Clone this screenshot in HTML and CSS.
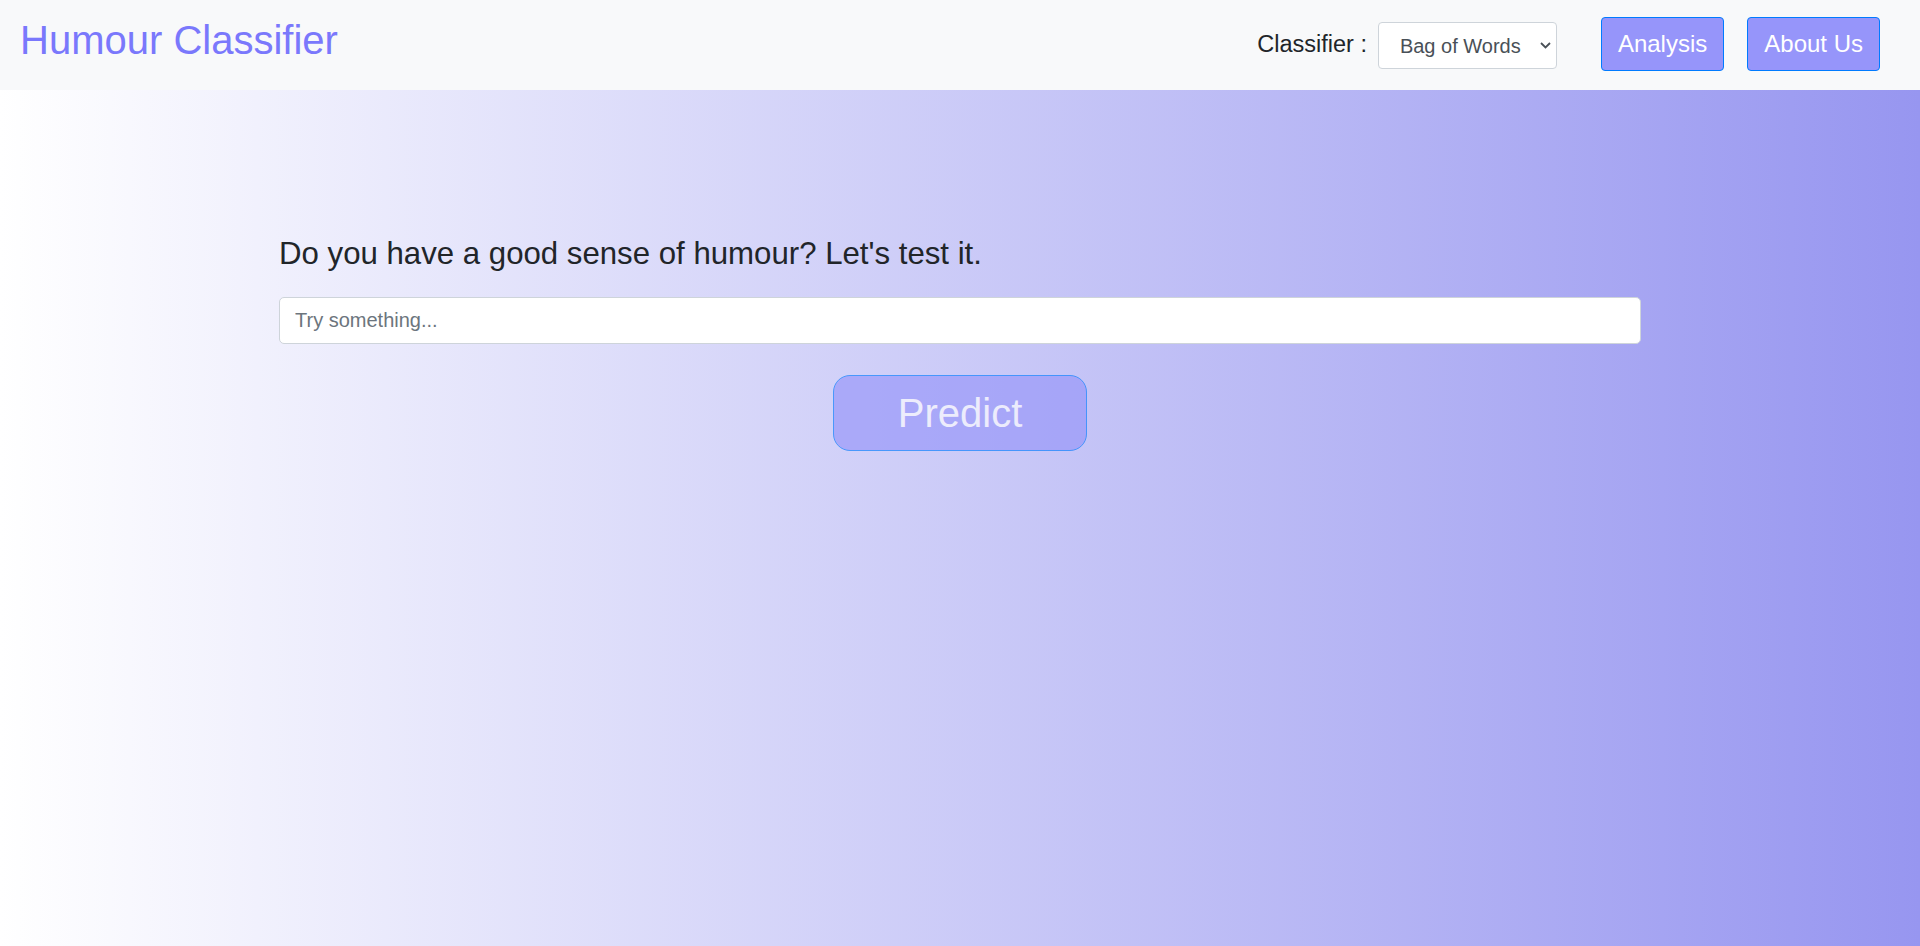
FILE: index.html
```html
<!DOCTYPE html>
<html lang="en">
<head>
<meta charset="utf-8">
<title>Humour Classifier</title>
<link rel="stylesheet" href="styles.css">
</head>
<body>
<header class="navbar">
  <a class="brand" href="#">Humour Classifier</a>
  <div class="nav-right">
    <label class="clf-label" for="clf">Classifier :</label>
    <select id="clf" class="clf-select">
      <option>Bag of Words</option>
      <option>TF-IDF</option>
    </select>
    <button class="nav-btn first">Analysis</button>
    <button class="nav-btn">About Us</button>
  </div>
</header>
<main class="main">
  <div class="container">
    <h3 class="question">Do you have a good sense of humour? Let's test it.</h3>
    <input class="text-input" type="text" placeholder="Try something...">
    <div class="predict-row">
      <button class="predict-btn" disabled>Predict</button>
    </div>
  </div>
</main>
</body>
</html>
```
FILE: styles.css
```css
* { box-sizing: border-box; }
html, body { margin: 0; padding: 0; }
body {
  font-family: "Liberation Sans", Arial, sans-serif;
  min-height: 946px;
  background: linear-gradient(to right, #ffffff, #9796f0);
  color: #212529;
}
.navbar {
  display: flex;
  align-items: flex-start;
  justify-content: space-between;
  height: 90px;
  background: #f8f9fa;
  padding: 10px 40px 0 20px;
}
.brand {
  font-size: 40px;
  line-height: 60px;
  color: #7a78fc;
  text-decoration: none;
}
.nav-right {
  display: flex;
  align-items: center;
  height: 54px;
  margin-top: 7px;
}
.clf-label {
  font-size: 23.5px;
  line-height: 36px;
  color: #212529;
  margin-right: 11px;
}
.clf-select {
  appearance: none;
  -webkit-appearance: none;
  width: 179px;
  height: 47px;
  margin-top: 3px;
  padding: 0 24px 0 21px;
  font-family: "Liberation Sans", Arial, sans-serif;
  font-size: 20px;
  color: #495057;
  background: #fff url("data:image/svg+xml;utf8,<svg xmlns='http://www.w3.org/2000/svg' width='11' height='7' viewBox='0 0 11 7'><path d='M1 1l4.5 4.5L10 1' fill='none' stroke='%23495057' stroke-width='1.8'/></svg>") no-repeat right 5px center;
  border: 1px solid #ced4da;
  border-radius: 4px;
}
.nav-btn {
  font-family: "Liberation Sans", Arial, sans-serif;
  font-size: 24px;
  line-height: 36px;
  padding: 8px 16px;
  color: #fff;
  background: #9695fa;
  border: 1px solid #007bff;
  border-radius: 4px;
  margin-left: 23px;
}
.nav-btn.first { margin-left: 44px; }
.main { padding-top: 145px; }
.container {
  width: 1362px;
  margin: 0 auto;
}
.question {
  margin: 0;
  font-size: 31.2px;
  font-weight: 400;
  line-height: 1.2;
  color: #212529;
}
.text-input {
  display: block;
  width: 100%;
  height: 47px;
  margin-top: 25px;
  padding: 0 15px;
  font-family: "Liberation Sans", Arial, sans-serif;
  font-size: 20px;
  color: #495057;
  background: #fff;
  border: 1px solid #ced4da;
  border-radius: 5px;
}
.text-input::placeholder { color: #6c757d; }
.predict-row {
  display: flex;
  justify-content: center;
  margin-top: 31px;
}
.predict-btn {
  font-family: "Liberation Sans", Arial, sans-serif;
  font-size: 40px;
  line-height: 60px;
  padding: 7px 64px;
  color: #fff;
  background: #9695fa;
  border: 1px solid #007bff;
  border-radius: 17px;
  opacity: 0.65;
}
```
